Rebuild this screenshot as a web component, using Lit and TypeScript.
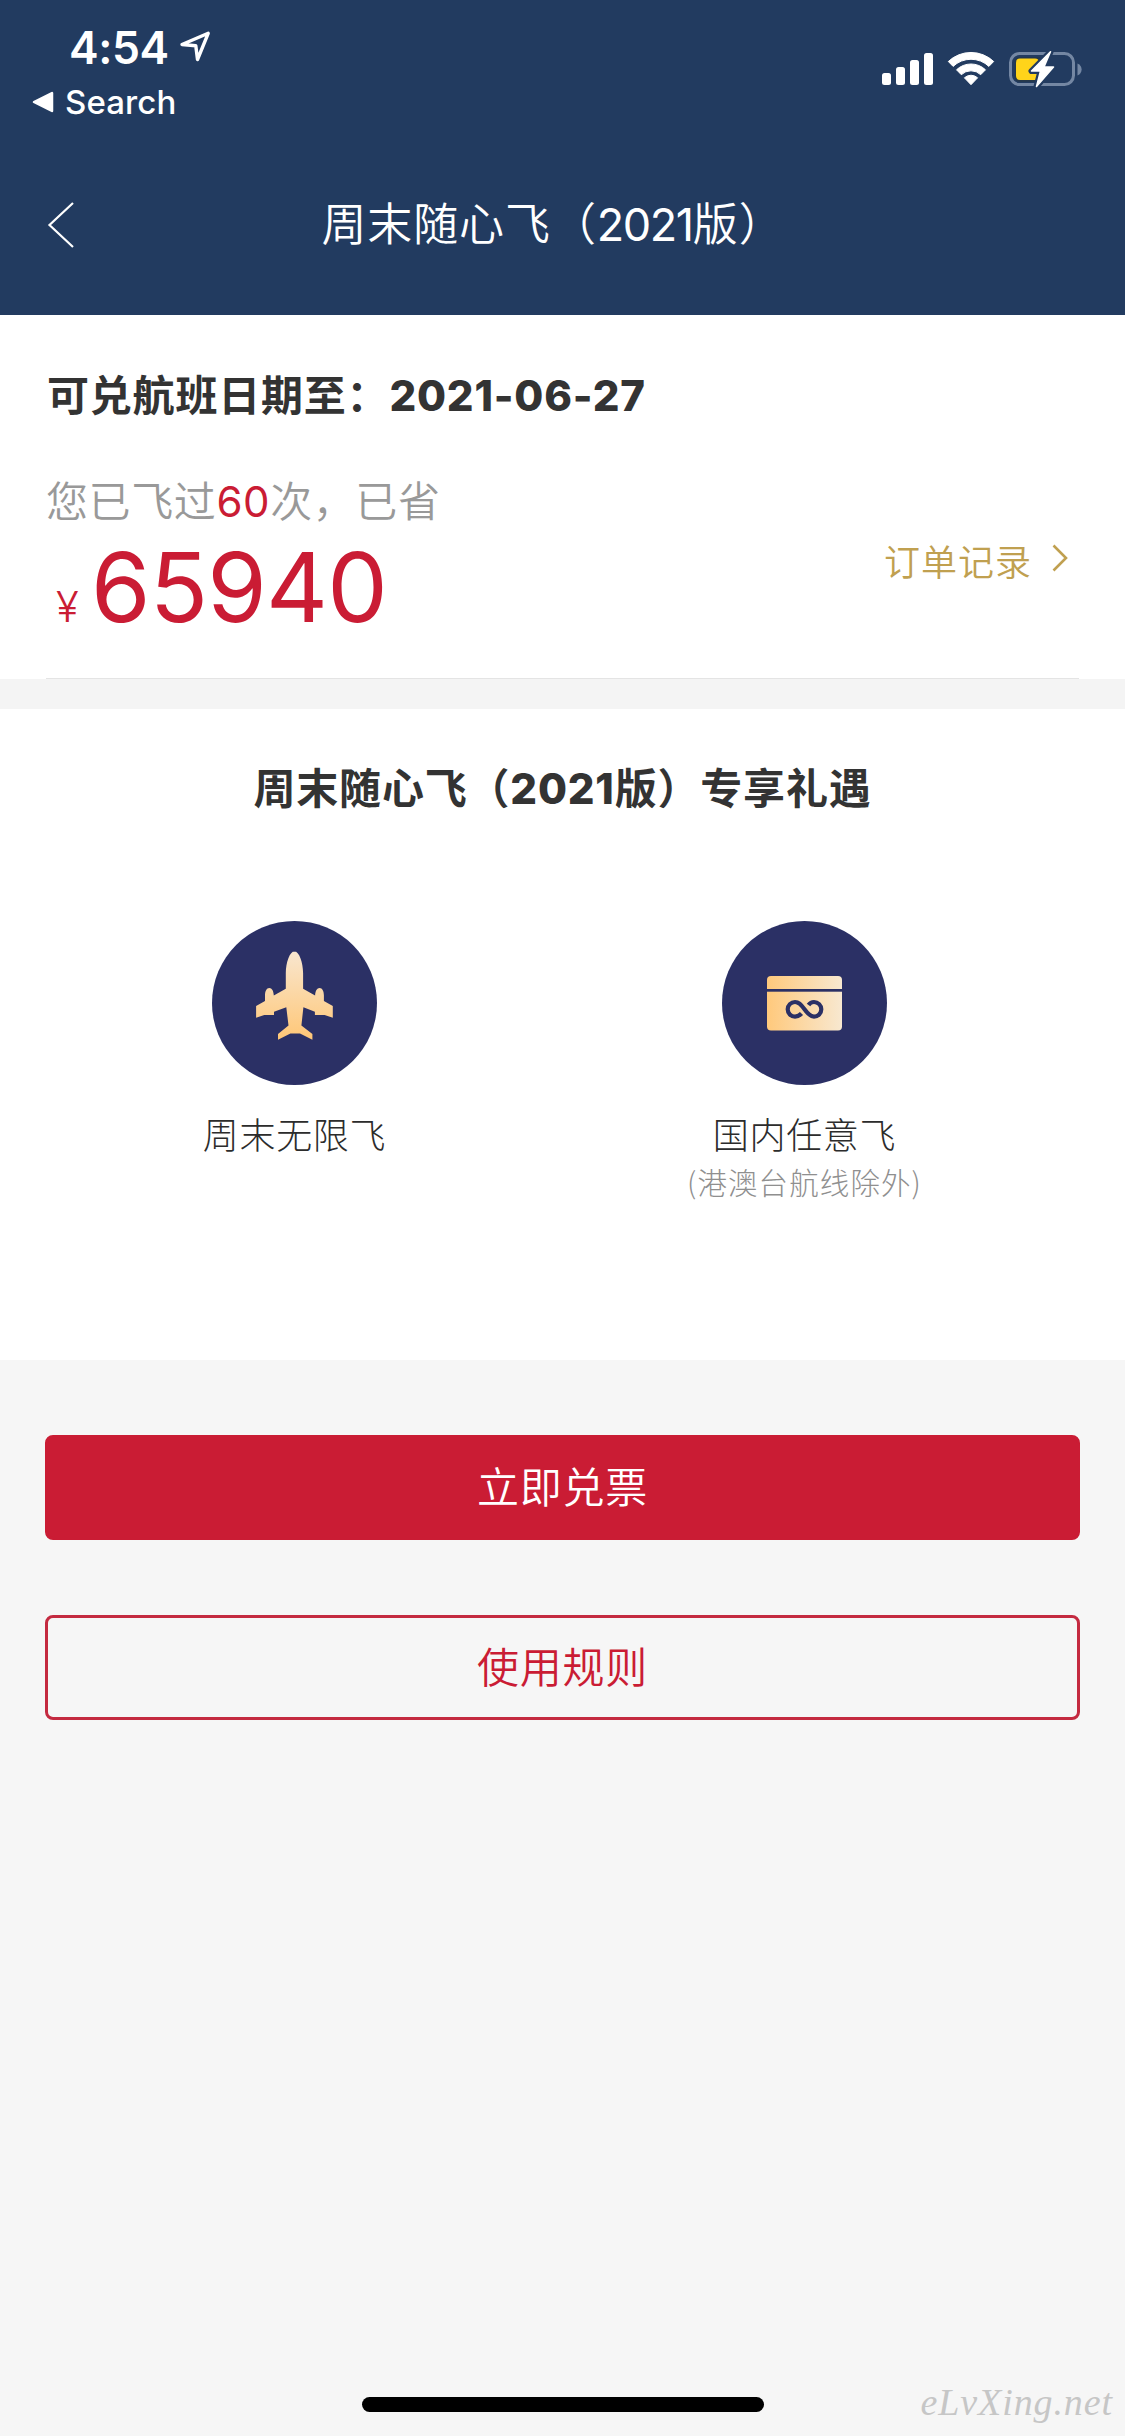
import { LitElement, html, css, svg } from "lit";
import { customElement, property } from "lit/decorators.js";

const planeIcon = svg`
  <defs>
    <linearGradient id="plane" x1="0" y1="0" x2="0" y2="1">
      <stop offset="0" stop-color="#f8e6cf" />
      <stop offset="1" stop-color="#ffc777" />
    </linearGradient>
  </defs>
  <ellipse cx="82.5" cy="82" rx="82.5" ry="82" fill="#2b3065" />
  <path fill="url(#plane)" d="M82.5 30.3c-4.6 0-8.7 11-8.7 22v15.4l-12 6.8c-.2-4.600-1.900-7.500-4.500-7.500-2.700 0-4.300 3.200-4.300 7.500v5.500l-8.900 5v11.700l8.200-2.700h9.700v-3.200l12.300-4.500 2.200 18.200-10.500 8.500v5.800l12.400-6.300h9.600l12.400 6.300v-5.800l-11-8.500 2-18.200 11.500 4.500v3.200h9.700l8.200 2.700V85l-8.900-5v-5.500c0-4.300-1.600-7.500-4.300-7.500-2.600 0-4.300 2.900-4.500 7.500l-12-6.800V52.300c0-11-4.100-22-8.700-22z" />
`;

const cardIcon = svg`
  <defs>
    <linearGradient id="card" x1="0" y1="0" x2="1" y2="0">
      <stop offset="0" stop-color="#ffc97c" />
      <stop offset="1" stop-color="#f8e8d0" />
    </linearGradient>
  </defs>
  <ellipse cx="82.5" cy="82" rx="82.5" ry="82" fill="#2b3065" />
  <rect x="45" y="55" width="75" height="54.500" rx="4" fill="url(#card)" />
  <rect x="44" y="68" width="77" height="2.700" fill="#2b3065" />
  <path fill="none" stroke="#2b3065" stroke-width="4.200" d="M79.500 92.500C77 95.300 75 95.600 73 95.600a7.300 7.300 0 1 1 0-14.600c3.500 0 5.500 1.800 9.500 7.300s6.500 7.300 9.500 7.300a7.300 7.300 0 1 0 0-14.600c-2 0-4 .8-5.500 3" />
`;

@customElement("status-bar")
class StatusBar extends LitElement {
  static styles = css`
    :host { display: flex; justify-content: space-between; height: 135px; color: #fff; }
    .left { padding: 20px 0 0 32px; }
    .clock { display: flex; align-items: center; height: 55px; padding-left: 37px; gap: 11px; }
    .time { font: 600 44.500px/54px Inter, sans-serif; letter-spacing: -0.4px; }
    .back { display: flex; align-items: center; height: 54px; gap: 11px; }
    .label { font: 500 33px/54px Inter, sans-serif; letter-spacing: 0.1px; }
    .arrow { margin-top: -2px; }
    .signals { margin: 51px 43px 0 0; }
    svg { display: block; flex: none; }
  `;
  render() {
    return html`
      <div class="left">
        <div class="clock">
          <span class="time">4:54</span>
          <svg class="arrow" width="31" height="31" viewBox="0 0 31 31">
            <path d="M2 13.500 28.200 2.300 17.500 28.500 15.800 14.800Z" fill="none" stroke="#fff" stroke-width="3.400" stroke-linejoin="round" />
          </svg>
        </div>
        <div class="back">
          <svg width="22" height="22" viewBox="0 0 22 22">
            <path d="M2 11 20 2v18z" fill="#fff" stroke="#fff" stroke-width="2.500" stroke-linejoin="round" />
          </svg>
          <span class="label">Search</span>
        </div>
      </div>
      <svg class="signals" width="200" height="37" viewBox="0 0 200 37">
        <g fill="#fff">
          <rect x="0" y="22" width="9" height="12" rx="2.500" />
          <rect x="14" y="16" width="9" height="18" rx="2.500" />
          <rect x="28" y="9" width="9" height="25" rx="2.500" />
          <rect x="42" y="2" width="9" height="32" rx="2.500" />
          <path d="M66.300 10.500a33 33 0 0 1 45.400 0l-4.800 4.900a26 26 0 0 0-35.800 0zM74.500 18.800a21 21 0 0 1 29 0l-4.800 4.900a14 14 0 0 0-19.400 0zM82.400 26.800a9.800 9.800 0 0 1 13.200 0L89 33.700z" stroke="#fff" stroke-width="1" stroke-linejoin="round" />
        </g>
        <rect x="128.500" y="2.500" width="63" height="31" rx="9" fill="none" stroke="#7487a3" stroke-width="3" />
        <path d="M195.500 12.500c5.500 2 5.500 10 0 12z" fill="#7487a3" />
        <rect x="132.800" y="6.300" width="28" height="24.400" rx="4.500" fill="#26384a" />
        <rect x="134" y="7.500" width="23" height="21.500" rx="4" fill="#ffd41a" />
        <path d="M168.500.8 149.500 20h9l-4 15.500L171.500 16h-9.500z" fill="#fff" stroke="#223b60" stroke-width="6" stroke-linejoin="round" />
        <path d="M168.500.8 149.500 20h9l-4 15.500L171.500 16h-9.500z" fill="#fff" stroke="#fff" stroke-width="1.500" stroke-linejoin="round" />
      </svg>
    `;
  }
}

@customElement("perk-item")
class PerkItem extends LitElement {
  static styles = css`
    :host { display: flex; flex-direction: column; align-items: center; width: 510px; color: #2c2c2c; }
    svg { display: block; }
    .name { margin-top: 24px; font: 300 36px/54px Inter, "Noto Sans CJK SC", sans-serif; letter-spacing: 0.7px; }
    .note { margin-top: -3px; font: 300 29.500px/42px "Noto Sans CJK SC", sans-serif; letter-spacing: 1.1px; color: #8f8f8f; }
  `;
  @property() icon = "";
  @property() name = "";
  @property() note = "";
  render() {
    return html`
      <svg width="165" height="164" viewBox="0 0 165 164">${this.icon === "plane" ? planeIcon : cardIcon}</svg>
      <div class="name">${this.name}</div>
      ${this.note ? html`<div class="note">${this.note}</div>` : ""}
    `;
  }
}

@customElement("app-root")
class AppRoot extends LitElement {
  static styles = css`
    :host {
      display: flex; flex-direction: column; position: relative; box-sizing: border-box;
      width: 1125px; height: 2436px; overflow: hidden; background: #f6f6f6;
      font-family: Inter, "Noto Sans CJK SC", sans-serif;
    }
    svg { display: block; flex: none; }
    .header { height: 315px; background: #223b60; color: #fff; }
    .nav { display: grid; grid-template-columns: 190px 1fr 209px; align-items: center; height: 180px; }
    .nav svg { margin-left: 47px; }
    .title { font-size: 45px; font-weight: 350; line-height: 60px; letter-spacing: 0.9px; text-align: center; white-space: nowrap; }
    .year { font-weight: 400; letter-spacing: -1.4px; }
    .summary { height: 364px; box-sizing: border-box; padding: 0 46px; background: #fff; }
    .summary-body { height: 363px; box-sizing: content-box; border-bottom: 1px solid #e4e4e4; }
    .expiry { padding: 51px 0 0 1px; font-size: 42px; line-height: 60px; font-weight: 700; letter-spacing: 0.8px; color: #333; white-space: nowrap; }
    .digits { font-weight: 800; }
    .stats { display: flex; justify-content: space-between; padding-top: 46px; }
    .flown { font-size: 42px; line-height: 60px; font-weight: 350; letter-spacing: 0.6px; color: #999; white-space: nowrap; }
    .red { color: #ca1c34; }
    .count { font-weight: 400; }
    .amount { display: flex; align-items: baseline; height: 100px; padding-left: 10px; line-height: 110px; color: #ca1c34; }
    .yen { width: 35px; font-size: 42px; font-weight: 300; }
    .sum { font-size: 96px; letter-spacing: -0.8px; }
    .orders { display: flex; align-items: flex-start; gap: 20px; padding: 64px 11px 0 0; color: #c0a050; }
    .orders-label { font-size: 36px; font-weight: 350; line-height: 54px; letter-spacing: 1px; }
    .orders svg { margin-top: 8px; }
    .gap { height: 30px; background: #f4f4f4; }
    .perks { height: 651px; background: #fff; }
    .perks-title { padding-top: 50px; font-size: 42px; line-height: 60px; font-weight: 700; letter-spacing: 0.8px; color: #333; text-align: center; }
    .perk-row { display: flex; padding: 102px 0 0 39.500px; }
    .actions { display: flex; flex-direction: column; gap: 75px; padding: 75px 45px 0; }
    .button {
      display: flex; align-items: center; justify-content: center; box-sizing: border-box; height: 105px;
      border: 3px solid #c42a40; border-radius: 8px; font-size: 42px; font-weight: 350; letter-spacing: 0.8px; line-height: 60px; color: #ca1c34;
    }
    .primary { background: #ca1c34; border-color: #ca1c34; color: #fff; }
    .home { margin: 677px 0 0 362px; width: 402px; height: 15px; border-radius: 8px; background: #000; }
    .mark { position: absolute; right: 12px; bottom: 12px; font: italic 400 38px/44px "Liberation Serif", serif; color: #c6c6c6; letter-spacing: 0.9px; }
  `;
  render() {
    return html`
      <div class="header">
        <status-bar></status-bar>
        <div class="nav">
          <svg width="28" height="48" viewBox="0 0 28 48">
            <path d="M26 2 2.500 24 26 46" fill="none" stroke="#fff" stroke-width="2.200" />
          </svg>
          <div class="title">周末随心飞（<span class="year">2021</span>版）</div>
        </div>
      </div>
      <div class="summary">
        <div class="summary-body">
          <div class="expiry">可兑航班日期至：<span class="digits">2021-06-27</span></div>
          <div class="stats">
            <div>
              <div class="flown">您已飞过<span class="red count">60</span>次，已省</div>
              <div class="amount"><span class="yen">¥</span><span class="sum">65940</span></div>
            </div>
            <div class="orders">
              <span class="orders-label">订单记录</span>
              <svg width="16" height="28" viewBox="0 0 16 28">
                <path d="M1.500 1.500 14 14 1.500 26.500" fill="none" stroke="#c0a050" stroke-width="2.600" />
              </svg>
            </div>
          </div>
        </div>
      </div>
      <div class="gap"></div>
      <div class="perks">
        <div class="perks-title">周末随心飞（<span class="digits">2021</span>版）专享礼遇</div>
        <div class="perk-row">
          <perk-item icon="plane" name="周末无限飞"></perk-item>
          <perk-item icon="card" name="国内任意飞" note="(港澳台航线除外)"></perk-item>
        </div>
      </div>
      <div class="actions">
        <div class="button primary">立即兑票</div>
        <div class="button">使用规则</div>
      </div>
      <div class="home"></div>
      <div class="mark">eLvXing.net</div>
    `;
  }
}
